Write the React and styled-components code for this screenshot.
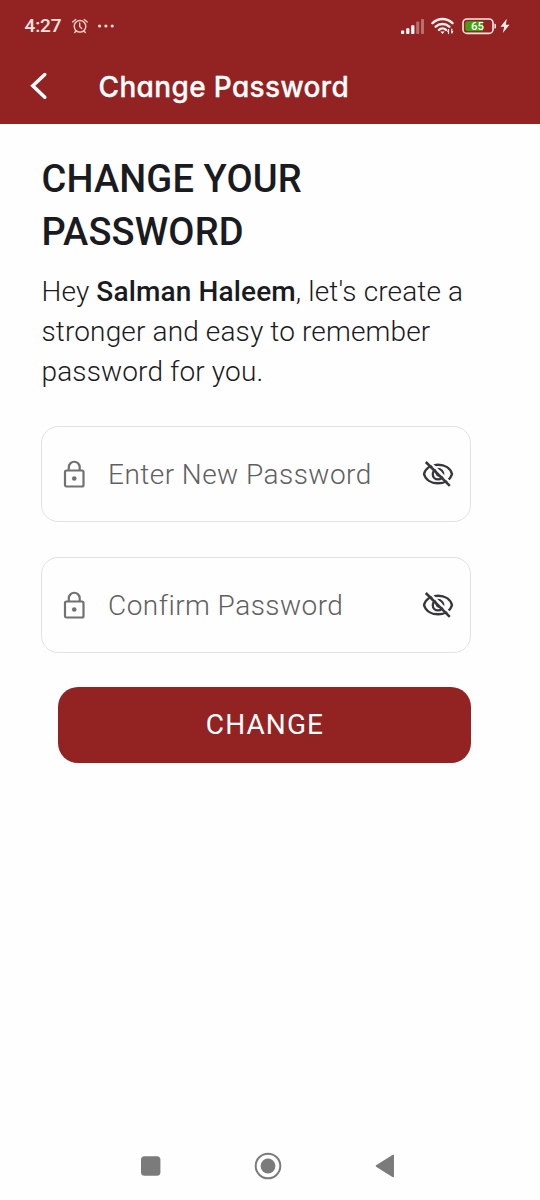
import React from 'react';
import styled, { createGlobalStyle } from 'styled-components';

const GlobalStyle = createGlobalStyle`
  *, *::before, *::after { box-sizing: border-box; }
  body { margin: 0; background: #fefefe; font-family: Roboto, "Liberation Sans", sans-serif; }
  svg { display: block; flex: none; }
`;

const Screen = styled.div`
  width: 540px;
  height: 1200px;
  display: flex;
  flex-direction: column;
  background: #fefefe;
  color: #1a1b1f;
`;

const Header = styled.header`
  height: 124px;
  background: #932323;
  color: #fff;
`;

const StatusBar = styled.div`
  height: 52px;
  padding: 0 30px 0 24.5px;
  display: flex;
  align-items: center;
  justify-content: space-between;
`;

const StatusGroup = styled.div`
  display: flex;
  align-items: center;
  gap: ${(p) => p.$gap}px;
`;

const Clock = styled.span`
  font-size: 19px;
  line-height: 24px;
  font-weight: 500;
  letter-spacing: -0.1px;
  color: #fbe4e0;
`;

const TitleBar = styled.div`
  height: 68px;
  padding-left: 28px;
  display: flex;
  align-items: center;
  gap: 48.5px;
`;

const BackButton = styled.button`
  padding: 0;
  border: 0;
  background: none;
  color: inherit;
`;

const Title = styled.h1`
  margin: 2px 0 0;
  font: 500 28px/36px Inter, "Open Sans", sans-serif;
  font-feature-settings: "cv11", "ss03";
  letter-spacing: 0.35px;
  -webkit-text-stroke: 0.3px currentColor;
  white-space: nowrap;
`;

const Content = styled.main`
  flex: 1;
  padding: 29px 69px 0 41px;
`;

const Heading = styled.h2`
  margin: 0 0 0 0.5px;
  font-size: 38px;
  line-height: 53px;
  font-weight: 500;
  letter-spacing: 0.15px;
`;

const Intro = styled.p`
  margin: 13px -10px 0 0.5px;
  font-size: 28px;
  line-height: 40px;
  font-weight: 300;
  letter-spacing: 0.14px;

  strong { font-weight: 500; }
`;

const Form = styled.form`
  margin-top: 34px;
  display: flex;
  flex-direction: column;
`;

const Field = styled.label`
  height: 96px;
  margin-bottom: 34.5px;
  padding: 0 16px 0 21px;
  display: flex;
  align-items: center;
  border: 1.5px solid #e2e2e2;
  border-radius: 17px;
`;

const Input = styled.input`
  flex: 1;
  min-width: 0;
  margin-left: 23px;
  padding: 2px 0 0;
  border: 0;
  outline: 0;
  background: none;
  font: 300 28px/40px Roboto, "Liberation Sans", sans-serif;
  letter-spacing: 0.46px;

  &::placeholder { color: #606060; opacity: 1; }
`;

const SubmitButton = styled.button`
  height: 76px;
  margin-left: 17px;
  padding: 0 0 0 1px;
  border: 0;
  border-radius: 20px;
  background: #932323;
  color: #fff;
  font: 400 28px/40px Roboto, "Liberation Sans", sans-serif;
  letter-spacing: 1.1px;
`;

const NavBar = styled.nav`
  height: 68px;
  padding: 0 145px 0 140px;
  display: flex;
  align-items: center;
  justify-content: space-between;
  color: #7b7b7b;
`;

const AlarmIcon = () => (
  <svg width="16" height="16" viewBox="0 0 16 16" fill="none" stroke="#f6cfc9" strokeWidth="1.4" strokeLinecap="round">
    <circle cx="8" cy="8.3" r="5.8" />
    <path d="M7.7 5v3.5l2 2M.8 4.1 3.7 1.4M15.2 4.1l-2.9-2.7M3.8 13.2l-1.1 1.3M12.2 13.2l1.1 1.3" />
  </svg>
);

const MoreIcon = () => (
  <svg width="17" height="4" viewBox="0 0 17 4" fill="#fbdcd7">
    <circle cx="1.6" cy="2" r="1.6" />
    <circle cx="7.9" cy="2" r="1.6" />
    <circle cx="14.2" cy="2" r="1.6" />
  </svg>
);

const SignalIcon = () => (
  <svg width="24" height="17" viewBox="0 0 24 17" fill="#fff">
    <rect x="1" y="12.5" width="3.2" height="3.5" rx=".8" />
    <rect x="6.2" y="10.3" width="3.2" height="5.7" rx=".8" />
    <rect x="11.2" y="7.2" width="3.2" height="8.8" rx=".8" />
    <rect x="16.2" y="3.5" width="3" height="12.5" rx=".8" opacity=".35" />
    <rect x="21" y="1" width="3" height="15" rx=".8" opacity=".35" />
  </svg>
);

const WifiIcon = () => (
  <svg width="24" height="18" viewBox="0 0 24 18" fill="none" stroke="#fdeeee" strokeWidth="2.4" strokeLinecap="round">
    <path d="M1.5 6.2a14.1 14.1 0 0 1 20 0M4.7 9.7a9.8 9.8 0 0 1 13.6 0M8 12.9a5 5 0 0 1 7 0" />
    <path d="M9.4 14.6h4.2L11.5 17z" fill="#fff" stroke="none" />
    <path d="M17.5 12.6v4M20.8 12v4" strokeWidth="1.2" />
    <path d="m15.8 14.8 1.7-2.4v2.4zM22.5 14l-1.7 2.6V14z" fill="#fff" stroke="none" />
  </svg>
);

const BatteryIcon = () => (
  <svg width="36" height="17" viewBox="0 0 36 17">
    <rect x="1" y="1" width="30" height="14.4" rx="4" fill="none" stroke="#fbe9e7" strokeWidth="1.6" />
    <path d="M5.5 3.3H21v9.8H5.5A2.2 2.2 0 0 1 3.3 11V5.5a2.2 2.2 0 0 1 2.2-2.2z" fill="#42a20d" />
    <path d="M32.4 5.8h.4A1.2 1.2 0 0 1 34 7v2.4a1.2 1.2 0 0 1-1.2 1.2h-.4z" fill="#fbe9e7" />
    <text x="15.6" y="12.3" textAnchor="middle" fill="#fff" fontFamily="Roboto, sans-serif" fontSize="11.5" fontWeight="500">65</text>
  </svg>
);

const BoltIcon = () => (
  <svg width="10" height="16" viewBox="0 0 10 16" fill="#fdeeee">
    <path d="M6.8.8.5 8.7h3.7L2.8 15 9.6 6.700H5.8z" />
  </svg>
);

const BackIcon = () => (
  <svg width="22" height="28" viewBox="0 0 22 28" fill="none" stroke="currentColor" strokeWidth="3.5" strokeLinecap="round" strokeLinejoin="miter">
    <path d="M16.8 2.5 4.8 13.7l12 11.500" />
  </svg>
);

const LockIcon = () => (
  <svg width="22" height="28" viewBox="0 0 22 28" fill="none" stroke="#717171" strokeWidth="2.2">
    <rect x="2" y="10.5" width="18.5" height="16" rx="1.5" />
    <path d="M5.8 10.5V7.2a5.45 5.45 0 0 1 10.9 0V10.5" />
    <circle cx="11.25" cy="18.5" r="2.3" fill="#717171" stroke="none" />
  </svg>
);

const EyeOffIcon = ({ id }) => (
  <svg width="32" height="28" viewBox="0 0 32 28" fill="none" stroke="#37373e">
    <mask id={id} maskUnits="userSpaceOnUse" x="0" y="0" width="32" height="28">
      <rect width="32" height="28" fill="#fff" stroke="none" />
      <path d="m5.2-.5 28 28" stroke="#000" strokeWidth="2.3" />
    </mask>
    <g mask={`url(#${id})`} strokeWidth="2.4">
      <path d="M2 14C3.500 8.300 9 4.700 16 4.700S28.500 8.300 30 14c-1.500 5.700-7 9.300-14 9.300S3.500 19.700 2 14z" strokeLinejoin="round" />
      <circle cx="16" cy="14.2" r="5.2" />
      <path d="M15 11.8a2.5 2.5 0 0 0 2.8 4" strokeWidth="1.5" />
    </g>
    <path d="m3.800 2 24 23.800" strokeWidth="2.600" />
  </svg>
);

const RecentsIcon = () => (
  <svg width="21" height="20" viewBox="0 0 21 20" fill="currentColor">
    <rect x="1" y=".3" width="19.4" height="19.4" rx="3.5" />
  </svg>
);

const HomeIcon = () => (
  <svg width="28" height="28" viewBox="0 0 28 28" fill="currentColor">
    <circle cx="14" cy="14" r="12.3" fill="none" stroke="currentColor" strokeWidth="2" />
    <circle cx="14" cy="14" r="7.4" />
  </svg>
);

const NavBackIcon = () => (
  <svg width="20" height="24" viewBox="0 0 20 24" fill="currentColor" stroke="currentColor" strokeWidth="1.5" strokeLinejoin="round">
    <path d="M18.2 1.5v21L1.5 12z" />
  </svg>
);

const PasswordField = ({ id, placeholder }) => (
  <Field>
    <LockIcon />
    <Input type="password" placeholder={placeholder} />
    <EyeOffIcon id={id} />
  </Field>
);

export default function App() {
  return (
    <Screen>
      <GlobalStyle />
      <Header>
        <StatusBar>
          <StatusGroup $gap={10}>
            <Clock>4:27</Clock>
            <AlarmIcon />
            <MoreIcon />
          </StatusGroup>
          <StatusGroup $gap={7}>
            <SignalIcon />
            <WifiIcon />
            <StatusGroup $gap={2}>
              <BatteryIcon />
              <BoltIcon />
            </StatusGroup>
          </StatusGroup>
        </StatusBar>
        <TitleBar>
          <BackButton type="button" aria-label="Back"><BackIcon /></BackButton>
          <Title>Change Password</Title>
        </TitleBar>
      </Header>
      <Content>
        <Heading>CHANGE YOUR<br />PASSWORD</Heading>
        <Intro>
          Hey <strong>Salman Haleem</strong>, let's create a<br />
          stronger and easy to remember<br />
          password for you.
        </Intro>
        <Form>
          <PasswordField id="new-password-eye" placeholder="Enter New Password" />
          <PasswordField id="confirm-password-eye" placeholder="Confirm Password" />
          <SubmitButton type="button">CHANGE</SubmitButton>
        </Form>
      </Content>
      <NavBar>
        <RecentsIcon />
        <HomeIcon />
        <NavBackIcon />
      </NavBar>
    </Screen>
  );
}
